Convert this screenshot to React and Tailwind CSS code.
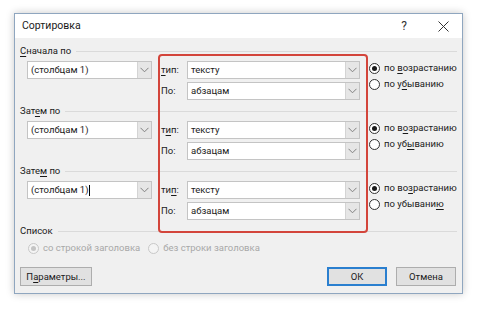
import React from "react";

const U = ({ children }) => <span className="underline underline-offset-2 decoration-1">{children}</span>;

const Chevron = () => (
  <svg width="9" height="6" viewBox="0 0 9 6" fill="none">
    <path d="M0.5 0.8 L4.5 4.8 L8.5 0.8" stroke="#808080" strokeWidth="1" />
  </svg>
);

const Combo = ({ text, w, caret }) => (
  <div className={`flex flex-none h-[18px] ${w} border border-[#c4c4c4] bg-white`}>
    <div className="flex-1 flex items-center pl-[3px] text-[#1a1a1a] leading-none whitespace-nowrap">
      {text}
      {caret && <span className="inline-block w-[1px] h-[11px] bg-black ml-[1px]" />}
    </div>
    <div className="w-[14px] h-full bg-[#e6e6e6] border-l border-[#d4d4d4] flex items-center justify-center">
      <Chevron />
    </div>
  </div>
);

const Radio = ({ checked, label, disabled }) => (
  <div className="flex items-center h-[16px] whitespace-nowrap">
    <div
      className={`flex-none w-[11px] h-[11px] rounded-full border flex items-center justify-center ${
        disabled ? "border-[#c8c8c8] bg-[#f4f4f4]" : "border-[#333] bg-white"
      }`}
    >
      {checked && <div className={`w-[5px] h-[5px] rounded-full ${disabled ? "bg-[#c4c4c4]" : "bg-[#1a1a1a]"}`} />}
    </div>
    <span className={`ml-[4px] leading-none ${disabled ? "text-[#a8a8a8]" : "text-[#1a1a1a]"}`}>{label}</span>
  </div>
);

const GroupLabel = ({ children }) => (
  <div className="flex items-center h-[16px]">
    <span className="text-[#1a1a1a] leading-none whitespace-nowrap">{children}</span>
    <div className="flex-1 h-px bg-[#dadada] ml-[5px]" />
  </div>
);

const Group = ({ label, tip, asc, desc, caret }) => (
  <div className="flex flex-col">
    <GroupLabel>{label}</GroupLabel>
    <div className="flex mt-[2px] pl-[7px]">
      <Combo text="(столбцам 1)" w="w-[125px]" caret={caret} />
      <div className="flex flex-col gap-[3px] ml-[9px]">
        <div className="flex items-center">
          <span className="w-[26px] text-[#1a1a1a] leading-none">{tip}</span>
          <Combo text="тексту" w="w-[173px]" />
        </div>
        <div className="flex items-center">
          <span className="w-[26px] text-[#1a1a1a] leading-none">По:</span>
          <Combo text="абзацам" w="w-[173px]" />
        </div>
      </div>
      <div className="flex flex-col ml-[9px] -mt-[1px]">
        <Radio checked label={asc} />
        <Radio label={desc} />
      </div>
    </div>
  </div>
);

export default function App() {
  return (
    <div
      className="w-[480px] h-[312px] bg-white pt-[13px] pl-[14px] text-[9.5px]"
      style={{ fontFamily: 'Roboto, "Noto Sans", sans-serif' }}
    >
      <div className="relative w-[449px] h-[281px] border border-[#8fa6bf] bg-[#f0f0f0] shadow-[0_0_8px_rgba(0,0,0,0.22)] flex flex-col">
        <div className="h-[24px] bg-white flex items-center pl-[7px] pr-[13px]">
          <span className="text-[10.5px] text-[#1a1a1a] leading-none">Сортировка</span>
          <span className="ml-auto text-[12px] text-[#333] leading-none mr-[31px]">?</span>
          <svg width="11" height="11" viewBox="0 0 11 11">
            <path d="M0.5 0.5 L10.5 10.5 M10.5 0.5 L0.5 10.5" stroke="#333" strokeWidth="1" />
          </svg>
        </div>
        <div className="flex-1 flex flex-col px-[5px] pt-[5px]">
          <Group
            label={<><U>С</U>начала по</>}
            tip={<><U>т</U>ип:</>}
            asc={<>по <U>в</U>озрастанию</>}
            desc={<>по у<U>б</U>ыванию</>}
          />
          <div className="mt-[3px]">
            <Group
              label={<>Зат<U>е</U>м по</>}
              tip={<>т<U>и</U>п:</>}
              asc={<>по в<U>о</U>зрастанию</>}
              desc={<>по уб<U>ы</U>ванию</>}
            />
          </div>
          <div className="mt-[3px]">
            <Group
              label={<>Зате<U>м</U> по</>}
              tip={<>ти<U>п</U>:</>}
              asc={<>по во<U>з</U>растанию</>}
              desc={<>по убывани<U>ю</U></>}
              caret
            />
          </div>
          <div className="mt-[3px]">
            <GroupLabel>Список</GroupLabel>
          </div>
          <div className="flex mt-[1px] pl-[8px]">
            <Radio checked disabled label="со строкой заголовка" />
            <div className="ml-[8px]">
              <Radio disabled label="без строки заголовка" />
            </div>
          </div>
          <div className="flex mt-[11px]">
            <button className="w-[72px] h-[19px] border border-[#adadad] bg-[#e1e1e1] text-[#1a1a1a] leading-none">
              П<U>а</U>раметры...
            </button>
            <button className="ml-auto w-[60px] h-[19px] border-2 border-[#2a7fcf] bg-[#e1e1e1] text-[#1a1a1a] leading-none">
              ОК
            </button>
            <button className="ml-[9px] mr-[1px] w-[60px] h-[19px] border border-[#adadad] bg-[#e1e1e1] text-[#1a1a1a] leading-none">
              Отмена
            </button>
          </div>
        </div>
        <div className="absolute left-[143px] top-[40px] w-[210px] h-[179px] border-2 border-[#d3453b] rounded-[4px] pointer-events-none" />
      </div>
    </div>
  );
}
